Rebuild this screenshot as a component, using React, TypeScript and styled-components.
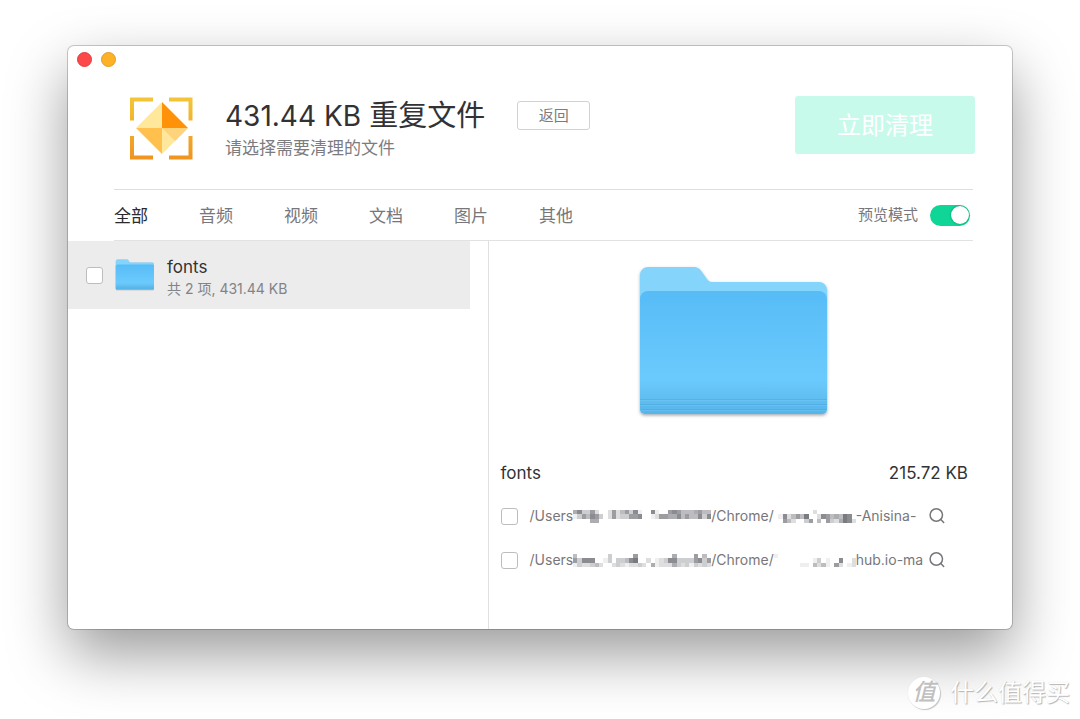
import React from "react";
import styled, { createGlobalStyle } from "styled-components";

const Global = createGlobalStyle`
  * { box-sizing: border-box; }
  body {
    margin: 0;
    background: #fff;
    font-family: Inter, "Noto Sans CJK SC", sans-serif;
    color: #323234;
  }
  button, input { font: inherit; margin: 0; padding: 0; }
`;

const Desktop = styled.div`
  position: relative;
  display: flex;
  min-height: 100vh;
  padding: 46px 68px 90px;
  overflow: hidden;
`;

const Window = styled.main`
  flex: 1;
  min-width: 0;
  display: flex;
  flex-direction: column;
  background: #fff;
  border-radius: 6px;
  box-shadow: 0 0 0 1px rgba(0, 0, 0, 0.2), 0 25px 60px rgba(0, 0, 0, 0.4);
  overflow: hidden;
`;

const TitleBar = styled.div`
  display: flex;
  gap: 9px;
  padding: 6px 9px 0;
`;

const WindowButton = styled.button<{ $color: string; $edge: string }>`
  width: 15px;
  height: 15px;
  border: 1px solid ${(p) => p.$edge};
  border-radius: 50%;
  background: ${(p) => p.$color};
`;

const Header = styled.header`
  display: flex;
  align-items: flex-start;
  padding: 29px 37px 27px 60px;
`;

const Logo = styled.svg`
  flex: none;
  width: 66px;
  height: 66px;
`;

const Heading = styled.div`
  flex: 1;
  min-width: 0;
  margin-left: 31px;
`;

const TitleRow = styled.div`
  display: flex;
  align-items: center;
  gap: 32px;
  height: 39px;
`;

const Title = styled.h1`
  margin: 0;
  font-size: 29px;
  line-height: 40px;
  font-weight: 400;
  white-space: nowrap;
`;

const Amount = styled.span`
  font-size: 28px;
`;

const Subtitle = styled.p`
  margin: 0;
  font-size: 17px;
  line-height: 26px;
  color: #7c7c80;
`;

const BackButton = styled.button`
  width: 73px;
  height: 29px;
  padding-bottom: 2px;
  border: 1px solid #d2d2d4;
  border-radius: 3px;
  background: #fff;
  font-size: 15px;
  color: #7c7c80;
`;

const CleanButton = styled.button`
  flex: none;
  width: 180px;
  height: 58px;
  padding-bottom: 4px;
  border: 0;
  border-radius: 3px;
  background: #c8faeb;
  font-size: 24px;
  color: #fff;
`;

const FilterBar = styled.nav`
  display: flex;
  align-items: center;
  height: 52px;
  margin: 0 39px 0 46px;
  border-top: 1px solid #dededf;
  border-bottom: 1px solid #e2e2e3;
`;

const Tab = styled.button<{ $active?: boolean }>`
  margin-right: 51px;
  padding-top: 1px;
  border: 0;
  background: none;
  font-size: 17px;
  line-height: 24px;
  color: ${(p) => (p.$active ? "#2a2a2c" : "#77777b")};
`;

const PreviewLabel = styled.label`
  display: flex;
  align-items: center;
  gap: 12px;
  margin-left: auto;
  padding-right: 3px;
  font-size: 15px;
  line-height: 24px;
  color: #77777b;
`;

const Switch = styled.input`
  appearance: none;
  display: flex;
  align-items: center;
  width: 40px;
  height: 21px;
  padding: 0 1px 0 2px;
  border-radius: 11px;
  background: #0fd696;

  &::before {
    content: "";
    width: 18px;
    height: 18px;
    border-radius: 50%;
    background: #fff;
    box-shadow: 0 0 2px rgba(0, 60, 40, 0.6);
  }
  &:checked { justify-content: flex-end; }
  &:not(:checked) { background: #c8c8ca; }
`;

const Body = styled.div`
  flex: 1;
  display: grid;
  grid-template-columns: minmax(0, 4fr) minmax(0, 5fr);
`;

const List = styled.section`
  padding-right: 18px;
`;

const ListRow = styled.label`
  display: flex;
  align-items: center;
  height: 68px;
  padding: 0 18px;
  background: #ececec;
`;

const CheckBox = styled.input`
  appearance: none;
  flex: none;
  width: 17px;
  height: 17px;
  border: 1px solid #bdbdbf;
  border-radius: 3px;
  background: #fff;
  &:checked { background: #0fd696; }
`;

const SmallFolder = styled.svg`
  flex: none;
  width: 40px;
  height: 34px;
  margin: 0 12px;
`;

const RowText = styled.span`
  padding-top: 6px;
`;

const RowName = styled.span`
  display: block;
  font-size: 17px;
  line-height: 22px;
  color: #323234;
`;

const RowInfo = styled.span`
  display: block;
  font-size: 14px;
  line-height: 22px;
  color: #838387;
`;

const Preview = styled.section`
  min-width: 0;
  padding: 22px 44px 0 12px;
  border-left: 1px solid #e0e0e1;
`;

const LargeFolder = styled.svg`
  display: block;
  width: 196px;
  height: 160px;
  margin: 0 auto;
`;

const Summary = styled.div`
  display: flex;
  justify-content: space-between;
  margin-top: 38px;
  font-size: 17px;
  line-height: 24px;
`;

const FileList = styled.ul`
  margin: 9px 0 0;
  padding: 0;
  list-style: none;
`;

const FileRow = styled.li`
  display: flex;
  align-items: center;
  height: 44px;
`;

const FileLabel = styled.label`
  flex: 1;
  min-width: 0;
  display: flex;
  align-items: center;
  gap: 12px;
`;

const Path = styled.span`
  flex: 1;
  min-width: 0;
  display: flex;
  align-items: center;
  white-space: pre;
  font-size: 14px;
  line-height: 24px;
  color: #77777b;
`;

const PathPart = styled.span`
  flex: none;
`;

const Redaction = styled.svg`
  flex: none;
  height: 13px;
`;

const RevealButton = styled.button`
  flex: none;
  width: 18px;
  height: 18px;
  margin: 0 22px 0 8px;
  border: 0;
  background: none;
  color: #77777b;
  svg { display: block; }
`;

const Watermark = styled.div`
  position: absolute;
  right: 10px;
  bottom: 9px;
  display: flex;
  align-items: center;
  gap: 10px;
  font-size: 24px;
  line-height: 34px;
  color: #fff;
  text-shadow: 1px 1px 1px #b4b4b4, 0 0 1px #d8d8d8;
`;

const Seal = styled.span`
  width: 32px;
  height: 32px;
  border-radius: 50%;
  background: #fff;
  box-shadow: 1px 1px 1px #c4c4c4, 0 0 1px #ddd;
  font-size: 23px;
  font-style: italic;
  font-weight: 500;
  line-height: 30px;
  text-align: center;
  color: #c0c0c0;
  text-shadow: none;
`;

type FolderProps = { id: string };

const FolderArt = ({ id }: FolderProps) => (
  <>
    <defs>
      <linearGradient id={`${id}-front`} x1="0" y1="0" x2="0" y2="1">
        <stop offset="0" stopColor="#57bcf6" />
        <stop offset="0.72" stopColor="#6bcafd" />
        <stop offset="0.87" stopColor="#61bef1" />
        <stop offset="1" stopColor="#56b5e9" />
      </linearGradient>
      <filter id={`${id}-shadow`} x="-5%" y="-5%" width="110%" height="112%">
        <feDropShadow dx="0" dy="1.5" stdDeviation="1.5" floodColor="#456" floodOpacity="0.5" />
      </filter>
    </defs>
    <g filter={`url(#${id}-shadow)`}>
      <path
        d="M4 12a8 8 0 0 1 8-8h45c5 0 7 2 9 5l5 7c2 3 4 3 7 3h105a8 8 0 0 1 8 8v119a5 5 0 0 1-5 5H9a5 5 0 0 1-5-5z"
        fill="#84d4fc"
      />
      <path d="M4 36a8 8 0 0 1 8-8h171a8 8 0 0 1 8 8v110a5 5 0 0 1-5 5H9a5 5 0 0 1-5-5z" fill={`url(#${id}-front)`} />
    </g>
    <path d="M4 136.500h187M4 141.500h187M5 146.500h185" stroke="#479fd2" strokeOpacity="0.4" fill="none" />
    <path d="M4 137.500h187M4 142.500h187M5 147.500h185" stroke="#7fd0fa" strokeOpacity="0.3" fill="none" />
  </>
);

/* Each digit is the darkness of one censored block, a dot is an empty one. */
const Mosaic = ({ rows }: { rows: string[] }) => {
  const cols = rows[0].length;
  return (
    <Redaction width={Math.floor((cols * 13) / 3)} viewBox={`0 0 ${cols} 3`} preserveAspectRatio="none" aria-hidden="true" shapeRendering="crispEdges">
      {rows.flatMap((row, y) =>
        [...row].map((c, x) =>
          c === "." ? null : (
            <rect key={`${x}-${y}`} x={x} y={y} width="1" height="1" fill="#6a6b72" fillOpacity={Number(c) / 9} />
          )
        )
      )}
    </Redaction>
  );
};

const SearchGlyph = () => (
  <svg width="18" height="18" viewBox="0 0 18 18" fill="none" stroke="currentColor" strokeWidth="1.5" strokeLinecap="round">
    <circle cx="8.300" cy="8" r="6.200" />
    <path d="M12.800 12.500L15.700 15.500" />
  </svg>
);

const files = [
  {
    user: [
      "573362..26246371..71..6764445644",
      "1364763.26233667..12665574644737",
      "....55..........................",
    ],
    site: [".........2.........", ".1724648..27645487.", "..642..36.4.6325872"],
    tail: "-Anisina-",
  },
  {
    user: [
      "4.......3.....6........5....6.4.",
      "63777..13.33478..2.1237733336736",
      "1322342..23212232.51222532313232",
    ],
    site: ["1..................", ".........13.1..7..2", "......11.4241.62.12"],
    tail: "hub.io-ma",
  },
];

const filters = ["全部", "音频", "视频", "文档", "图片", "其他"];

export default function App() {
  return (
    <Desktop>
      <Global />
      <Window>
        <TitleBar>
          <WindowButton aria-label="关闭" $color="#fc4848" $edge="#e23e40" />
          <WindowButton aria-label="最小化" $color="#fdb127" $edge="#e09c22" />
        </TitleBar>
        <Header>
          <Logo viewBox="0 0 66 66" aria-hidden="true">
            <defs>
              <linearGradient id="frame" gradientUnits="userSpaceOnUse" x1="0" y1="1" x2="0" y2="64">
                <stop offset="0" stopColor="#f3c638" />
                <stop offset="1" stopColor="#ef9420" />
              </linearGradient>
            </defs>
            <path d="M4 24.500V3.500H25M41 3.500H62.500V24.500M62.500 40V61.500H41M25 61.500H4V40" fill="none" stroke="url(#frame)" strokeWidth="4" />
            <path d="M34 6V32H8z" fill="#ffe79b" />
            <path d="M34 6L60 32H34z" fill="#ff9208" />
            <path d="M8 32H34V58z" fill="#ffc04e" />
            <path d="M34 32H60L34 58z" fill="#ffe79b" />
            <path d="M34 32H60L47 45z" fill="#ffd27c" />
          </Logo>
          <Heading>
            <TitleRow>
              <Title><Amount>431.44 KB</Amount> 重复文件</Title>
              <BackButton>返回</BackButton>
            </TitleRow>
            <Subtitle>请选择需要清理的文件</Subtitle>
          </Heading>
          <CleanButton>立即清理</CleanButton>
        </Header>
        <FilterBar>
          {filters.map((name, i) => (
            <Tab key={name} $active={i === 0}>{name}</Tab>
          ))}
          <PreviewLabel>
            预览模式
            <Switch type="checkbox" role="switch" defaultChecked />
          </PreviewLabel>
        </FilterBar>
        <Body>
          <List>
            <ListRow>
              <CheckBox type="checkbox" />
              <SmallFolder viewBox="0 0 196 160" aria-hidden="true"><FolderArt id="small" /></SmallFolder>
              <RowText>
                <RowName>fonts</RowName>
                <RowInfo>共 2 项, 431.44 KB</RowInfo>
              </RowText>
            </ListRow>
          </List>
          <Preview>
            <LargeFolder viewBox="0 0 196 160" aria-hidden="true"><FolderArt id="large" /></LargeFolder>
            <Summary>
              <span>fonts</span>
              <span>215.72 KB</span>
            </Summary>
            <FileList>
              {files.map((file) => (
                <FileRow key={file.tail}>
                  <FileLabel>
                    <CheckBox type="checkbox" />
                    <Path>
                      <PathPart>/Users</PathPart>
                      <Mosaic rows={file.user} />
                      <PathPart>/Chrome/</PathPart>
                      <Mosaic rows={file.site} />
                      <PathPart>{file.tail}</PathPart>
                    </Path>
                  </FileLabel>
                  <RevealButton aria-label="在访达中显示"><SearchGlyph /></RevealButton>
                </FileRow>
              ))}
            </FileList>
          </Preview>
        </Body>
      </Window>
      <Watermark>
        <Seal>值</Seal>
        <span>什么值得买</span>
      </Watermark>
    </Desktop>
  );
}
